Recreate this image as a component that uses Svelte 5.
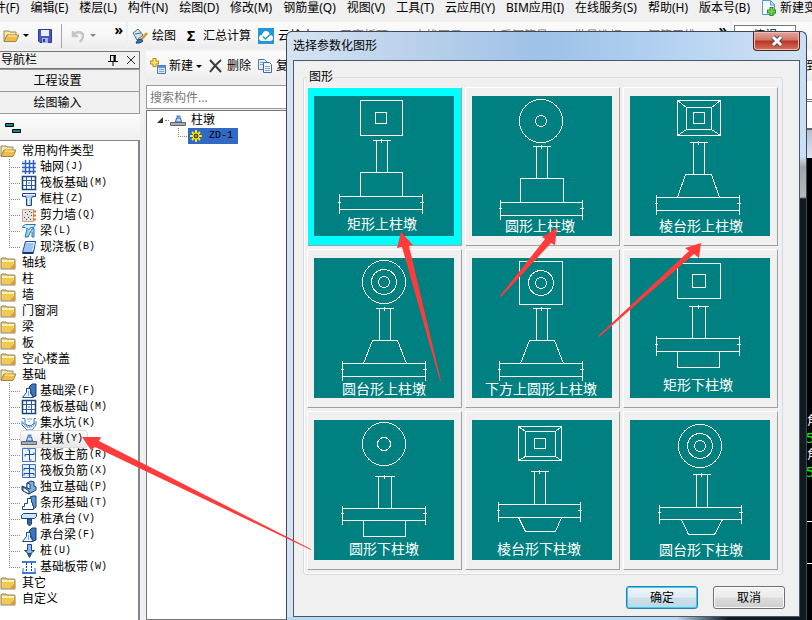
<script>
    const menus = [
        '文件(F)', '编辑(E)', '楼层(L)', '构件(N)', '绘图(D)', '修改(M)', '钢筋量(Q)', '视图(V)',
        '工具(T)', '云应用(Y)', 'BIM应用(I)', '在线服务(S)', '帮助(H)', '版本号(B)'
    ];

    const tree = [
        { name: '常用构件类型', children: [
            { name: '轴网', key: 'J', icon: 'axis' },
            { name: '筏板基础', key: 'M', icon: 'raft' },
            { name: '框柱', key: 'Z', icon: 'column' },
            { name: '剪力墙', key: 'Q', icon: 'wall' },
            { name: '梁', key: 'L', icon: 'beam' },
            { name: '现浇板', key: 'B', icon: 'slab' }
        ] },
        { name: '轴线' },
        { name: '柱' },
        { name: '墙' },
        { name: '门窗洞' },
        { name: '梁' },
        { name: '板' },
        { name: '空心楼盖' },
        { name: '基础', children: [
            { name: '基础梁', key: 'F', icon: 'footbeam' },
            { name: '筏板基础', key: 'M', icon: 'raft' },
            { name: '集水坑', key: 'K', icon: 'sump' },
            { name: '柱墩', key: 'Y', icon: 'pier' },
            { name: '筏板主筋', key: 'R', icon: 'mainbar' },
            { name: '筏板负筋', key: 'X', icon: 'negbar' },
            { name: '独立基础', key: 'P', icon: 'isolated' },
            { name: '条形基础', key: 'T', icon: 'strip' },
            { name: '桩承台', key: 'V', icon: 'cap' },
            { name: '承台梁', key: 'F', icon: 'footbeam' },
            { name: '桩', key: 'U', icon: 'pile' },
            { name: '基础板带', key: 'W', icon: 'band' }
        ] },
        { name: '其它' },
        { name: '自定义' }
    ];

    // all icons are drawn on a 16x16 box
    const icons = {
        closed: '<path d="M1 4q0-1 1-1h4l1 1h7q1 0 1 1v9H1z" fill="#f3c953" stroke="#8a8578"/><path d="M2 5h12v2H2z" fill="#fff0b4"/><path d="M10 13.500h5V8z" fill="#d79a2b"/>',
        open: '<path d="M1 13V3h5l1 1h6v3" fill="#ffe79a" stroke="#8a8578"/><path d="M1 13.500L4 7h12l-3 6.500z" fill="#f0bc45" stroke="#a08348"/><path d="M5 8h9" stroke="#fff2bd"/>',
        axis: '<path d="M4.500 1v14M8.500 1v14M12.500 1v14M1 4.500h14M1 8.500h14M1 12.500h14" stroke="#2e5fc0" stroke-width="1.500"/><path d="M1 3h2M1 7h2M1 11h2" stroke="#8fb4ee"/>',
        raft: '<path d="M1.500 1.500h13v13h-13z" fill="#fff" stroke="#17427e" stroke-width="1.500"/><path d="M5.500 2v12M10.500 2v12M2 5.500h12M2 10.500h12" stroke="#2c5c9e"/><path d="M7 7h2v2H7z" fill="#9fc0e8"/>',
        column: '<path d="M1.500 2.500h13v3h-3l-1 2v7h-5v-7l-1-2h-3z" fill="#a9d1f5" stroke="#1c3f99"/><path d="M2 3.500h12M7.500 7v7" stroke="#fff"/>',
        wall: '<path d="M1.500 2.500h11v12h-11z" fill="#e4e4e4" stroke="#d9a184"/><path d="M4 5.500h1M8 4.500h1M6 7.500h1M10 8.500h1M3 10.500h1M7 10.500h1M5 12.500h1M9 12.500h1M10 5.500h1" stroke="#444"/><path d="M12 4.500h3M12 8.500h3M12 12.500h3" stroke="#d67a24" stroke-width="2"/>',
        beam: '<path d="M1.500 3.500l3-2h10l-2 3h-3l-1 2-3-1-1-1h-3z" fill="#d8ecfb" stroke="#2379b8"/><path d="M6 6l-2 8h3l4-8 2-1v9h-2V9" fill="#9fcdf0" stroke="#2379b8"/>',
        slab: '<path d="M4.500 2.500h10l-2 11h-11z" fill="#9fc4f4" stroke="#1b4aa5"/><path d="M5.500 3.500h8l-2 8" fill="none" stroke="#eaf4ff"/><path d="M1.500 14h11" stroke="#16377c" stroke-width="2"/>',
        footbeam: '<path d="M8 4l3-3h4v12l-3 1z" fill="#3d74b8" stroke="#163d78"/><path d="M5.500 5.500h4v5l3 4H1.500l4-5z" fill="#e9f3ff" stroke="#1d4d92"/><path d="M7.500 8v5" stroke="#7fa8d8"/>',
        sump: '<path d="M1 3.500h3v5l3 2h3l3-2v-5h2M1 6v4l5 5h5l4-5V6" fill="none" stroke="#3a7fc4"/><path d="M2 8l4 4h4l4-4" stroke="#3a7fc4" stroke-width="2" stroke-dasharray="1 1" fill="none"/><path d="M6 4h5M8 6v1" stroke="#6ba7dd"/>',
        pier: '<path d="M5.500 10l1-4h4l1 4z" fill="#b9dcfa" stroke="#2a62ad"/><path d="M6.500 3.500h4v2h-4z" fill="#4d88cf"/><path d="M.5 10.500h15v3H.5z" fill="#a8adb3" stroke="#5e646c"/>',
        mainbar: '<path d="M1.500 1.500h13v13h-13z" fill="#eaf3ff" stroke="#4472b8"/><path d="M8.500 3v10M4 7.500h9M4 7.500v2M13 7.500v-2M8.500 3h-2M8.500 13h2" stroke="#1f4b93" fill="none"/>',
        negbar: '<path d="M1.500 1.500h13v13h-13z" fill="#dcebfd" stroke="#4472b8"/><path d="M8.500 2v12M3 5.500h10M3 10.500h10M3 5.500v2M13 5.500v2M3 10.500v2M13 10.500v2" stroke="#1f4b93" fill="none"/>',
        isolated: '<path d="M1 7l5 2v-5l4-2 3 1v4l2 1v3l-7 4-7-4z" fill="#79afdf" stroke="#173e70"/><path d="M6 4l3 1v5l-3-1zM2 8l6 4v3l-6-3z" fill="#eef7ff" stroke="#173e70"/>',
        strip: '<path d="M9 2l3-1h3v11l-3 2z" fill="#5c93cf" stroke="#173e70"/><path d="M6.500 3.500h4v4h1v3h1v4H1.500v-3h2v-3h3z" fill="#fff" stroke="#1c467f"/>',
        cap: '<path d="M.5 4.500l2-2h13v3l-2 2H.5z" fill="#cfe5f8" stroke="#1c467f"/><path d="M6.500 8h4v5l-2 2-2-2z" fill="#2f68aa" stroke="#1c467f"/><path d="M1 7.500h12" stroke="#1c467f"/>',
        pile: '<path d="M6.500 1.500h4v6h3l-5 4-5-4h3z" fill="#8ebbe8" stroke="#1c467f"/><path d="M6.500 10.500h4l-2 4z" fill="#2a5a9b" stroke="#1c467f"/>',
        band: '<path d="M1 3h14M1 14h14" stroke="#3b7bd1" stroke-width="2"/><path d="M5.500 4v9M10.500 4v9" stroke="#1d3f77" stroke-dasharray="2 1"/><path d="M2 13V9M14 13V9" stroke="#8db8ee" stroke-width="2"/>',
        save: '<path d="M1.500 1.500h13v13H3l-1.500-1.500z" fill="#4a56c4" stroke="#303a94"/><path d="M4 2h8v6H4z" fill="#e8ecff"/><path d="M5 10h6v5H5z" fill="#a9b2e8"/><path d="M6 11h2v3H6z" fill="#303a94"/>',
        undo: '<path d="M3 3v5h5M3 8c2-5 10-5 10 0 0 3-2 4-3 6" fill="none" stroke="#c3c6ca" stroke-width="2.500"/>',
        paint: '<path d="M1 5l5-4 5 6-6 5z" fill="#cfe2ee" stroke="#4e7386"/><path d="M3 6l6-1" stroke="#4e7386"/><path d="M15 5l-6 7" stroke="#d8962a" stroke-width="2.500"/><path d="M4 15q1-4 5-4l2 2q-3 3-7 2z" fill="#3a6fc6" stroke="#1e4388"/>',
        cloud: '<path d="M0 0h16v16H0z" fill="#2196d9"/><path d="M4 13q-3 0-3-3t3-3q1-4 4-4t4 4q3 0 3 3t-3 3z" fill="#fff"/><path d="M5 8.500l2.500 2.500L12 6.500" fill="none" stroke="#2196d9" stroke-width="1.500"/>',
        add: '<path d="M4.500 0v9M0 4.500h9" stroke="#b98a1a" stroke-width="4"/><path d="M4.500 1v7M1 4.500h7" stroke="#ffe96b" stroke-width="2"/><path d="M7.500 7.500h8v8h-8z" fill="#dcebff" stroke="#5077b3"/><path d="M8 9h7" stroke="#5b94de" stroke-width="2"/><path d="M9 11.500h5M9 13.500h5" stroke="#7da3d8"/>',
        remove: '<path d="M2 2l11 12M13 2Q7 7 2 14" fill="none" stroke="#3c3c3c" stroke-width="2"/>',
        copy: '<path d="M1.500 1.500h6l2 2v8h-8z" fill="#e6f0ff" stroke="#5077b3"/><path d="M6.500 4.500h6l2 2v8h-8z" fill="#f3f8ff" stroke="#3f68aa"/><path d="M8 8.500h5M8 10.500h5M8 12.500h5M3 4.500h3M3 6.500h3" stroke="#7da3d8"/>',
        page: '<path d="M1.500 .5h8l4 4v10h-12z" fill="#f2f9ff" stroke="#5a9bd0"/><path d="M9.500 1v4h4" fill="#b9dcf5" stroke="#5a9bd0"/><path d="M10.500 7v9M6 11.500h9" stroke="#2f8f23" stroke-width="4"/><path d="M10.500 8v7M7 11.500h7" stroke="#74d84b" stroke-width="2"/>',
        sun: '<path d="M8 2v12M2 8h12M4 4l8 8M12 4l-8 8" stroke="#ffe81a" stroke-width="2"/><circle cx="8" cy="8" r="3" fill="#5d5200" stroke="#ffe81a"/><path d="M7 8h2" stroke="#ffe81a"/>',
        pin: '<path d="M5.500 3v6M10 3v6M5 3.500h6M3 9.500h10M8 10v4" stroke="#000"/><path d="M9.500 3v6" stroke="#000" stroke-width="2"/>',
        close: '<path d="M4 4l8 8M12 4l-8 8" stroke="#222"/>'
    };

    const box = (x1, y1, x2, y2) => `M${x1} ${y1}H${x2}V${y2}H${x1}Z`;

    const column = (x1, x2, y1, y2) => {
        const mid = Math.floor((x1 + x2) / 2) - .5;
        return `M${x1 - 4} ${y1}H${x2 + 3}M${x1} ${y1}V${y2}M${x2} ${y1}V${y2}M${mid} ${y1 - 1.5}v4`;
    };

    const slab = (x1, x2, y1, y2) => {
        const mid = Math.floor((y1 + y2) / 2) - .5;
        return box(x1, y1, x2, y2)
            + `M${x1} ${y1 - 3}V${y2 + 4}M${x2} ${y1 - 3}V${y2 + 4}M${x1 - 1.5} ${mid}h3M${x2 - 2.5} ${mid}h4`;
    };

    // trapezoid between two levels
    const taper = (a1, a2, ya, b1, b2, yb) => `M${a1} ${ya}H${a2}L${b2} ${yb}H${b1}Z`;

    const corners = (x1, y1, x2, y2, u1, v1, u2, v2) =>
        box(x1, y1, x2, y2) + box(u1, v1, u2, v2)
        + `M${x1} ${y1}L${u1} ${v1}M${x2} ${y1}L${u2} ${v1}M${x1} ${y2}L${u1} ${v2}M${x2} ${y2}L${u2} ${v2}`;

    const shapes = [
        { name: '矩形上柱墩', x: 33, y: 133, circles: [],
          d: box(46.5, 4.5, 88.5, 39.5) + box(61.5, 16.5, 72.5, 27.5) + column(62.5, 73.5, 44.5, 76.5)
            + box(46.5, 76.5, 88.5, 100.5) + slab(25.5, 108.5, 100.5, 113.5) },
        { name: '圆形上柱墩', x: 33, y: 135, circles: [[69, 25, 21.5], [69, 25, 5.5]],
          d: column(64.5, 75.5, 50.5, 82.5) + box(48.5, 82.5, 91.5, 106.5) + slab(28.5, 110.5, 106.5, 119.5) },
        { name: '棱台形上柱墩', x: 29, y: 135, circles: [],
          d: corners(47.5, 4.5, 90.5, 39.5, 56.5, 11.5, 81.5, 33.5) + box(63.5, 16.5, 74.5, 27.5)
            + column(63.5, 74.5, 46.5, 78.5) + taper(55.5, 81.5, 78.5, 47.5, 89.5, 101.5) + slab(26.5, 109.5, 101.5, 114.5) },
        { name: '圆台形上柱墩', x: 28, y: 136, circles: [[70, 24, 21.5], [70, 24, 12.5], [70, 24, 5.5]],
          d: column(65.5, 76.5, 50.5, 82.5) + taper(58.5, 83.5, 82.5, 49.5, 92.5, 105.5) + slab(28.5, 111.5, 105.5, 118.5) },
        { name: '下方上圆形上柱墩', x: 13, y: 136, circles: [[69, 25, 12.5], [69, 25, 5.5]],
          d: box(47.5, 3.5, 90.5, 46.5) + column(64.5, 75.5, 50.5, 82.5)
            + taper(57.5, 82.5, 82.5, 48.5, 91.5, 105.5) + slab(27.5, 110.5, 105.5, 118.5) },
        { name: '矩形下柱墩', x: 33, y: 132, circles: [],
          d: box(47.5, 5.5, 90.5, 40.5) + box(62.5, 16.5, 75.5, 29.5) + column(62.5, 75.5, 48.5, 80.5)
            + slab(26.5, 109.5, 80.5, 93.5) + box(47.5, 93.5, 89.5, 109.5) },
        { name: '圆形下柱墩', x: 35, y: 134, circles: [[70, 24, 21.5], [70, 24, 6.5]],
          d: column(64.5, 77.5, 56.5, 88.5) + slab(28.5, 111.5, 88.5, 100.5) + box(49.5, 100.5, 91.5, 116.5) },
        { name: '棱台形下柱墩', x: 25, y: 134, circles: [],
          d: corners(46.5, 6.5, 89.5, 40.5, 53.5, 11.5, 83.5, 36.5) + box(62.5, 18.5, 73.5, 28.5)
            + column(62.5, 73.5, 51.5, 84.5) + slab(26.5, 108.5, 84.5, 97.5) + taper(46.5, 89.5, 97.5, 53.5, 83.5, 111.5) },
        { name: '圆台形下柱墩', x: 29, y: 135, circles: [[70, 26, 21.5], [70, 26, 12.5], [70, 26, 5.5]],
          d: column(66.5, 77.5, 54.5, 87.5) + slab(29.5, 111.5, 87.5, 99.5) + taper(51.5, 92.5, 99.5, 58.5, 84.5, 114.5) }
    ];

    const arrows = [
        '401,232 413,245 409,246 441,381 440,381 402,247 397,248',
        '557,228 555,245 551,243 501,297 500,296 545,239 542,237',
        '701,243 699,258 694,254 599,337 598,336 689,251 685,248',
        '82,437 101,437 99,441 311,549 311,550 95,447 91,450'
    ];

    let picked = $state(0);
    let search = $state('');
</script>

{#snippet icon(name)}
    <svg class="icon" viewBox="0 0 16 16" fill="none" aria-hidden="true">{@html icons[name]}</svg>
{/snippet}

<div class="app">
    <nav class="menubar">
        {#each menus as menu}
            <button>{menu}</button>
        {/each}
        <button class="change">{@render icon('page')}新建变更</button>
    </nav>

    <div class="toolbars">
        <div class="bar quick">
            <button aria-label="打开">{@render icon('open')}<i class="caret"></i></button>
            <button aria-label="保存">{@render icon('save')}</button>
            <span class="sep"></span>
            <button aria-label="撤销">{@render icon('undo')}<i class="caret dim"></i></button>
            <span class="more">»</span>
        </div>
        <div class="bar tools">
            <button>{@render icon('paint')}绘图</button>
            <button><b class="sigma">Σ</b>汇总计算</button>
            <button>{@render icon('cloud')}云检查</button>
            <button class="far">平齐板顶</button>
            <button class="far">查找图元</button>
            <button class="far">查看钢筋量</button>
            <button class="far">批量选择</button>
            <button class="far">钢筋三维</button>
            <span class="more">»</span>
        </div>
        <div class="bar view">
            <button class="angle">俯视</button>
        </div>
    </div>

    <div class="body">
        <aside>
            <header>
                <span>导航栏</span>
                <button aria-label="固定">{@render icon('pin')}</button>
                <button aria-label="关闭导航栏">{@render icon('close')}</button>
            </header>
            <button class="section">工程设置</button>
            <button class="section">绘图输入</button>
            <div class="strip">
                <svg width="18" height="12" aria-hidden="true">
                    <path d="M.5 .5h8v3h-8zM7.500 6.500h8v3h-8z" fill="#009090" stroke="#000" />
                </svg>
            </div>
            <ul class="tree">
                {#each tree as group}
                    <li>
                        <button class="folder">{@render icon(group.children ? 'open' : 'closed')}{group.name}</button>
                        {#if group.children}
                            <ul>
                                {#each group.children as item, i}
                                    <li class="leaf">
                                        <svg class="branch" width="12" height="16" aria-hidden="true">
                                            <path d={i === group.children.length - 1 ? 'M.5 0V8M0 8.500H12' : 'M.5 0V16M0 8.500H12'} />
                                        </svg>
                                        <button class:hot={item.key === 'Y'}>{@render icon(item.icon)}{item.name}<span class="key">({item.key})</span></button>
                                    </li>
                                {/each}
                            </ul>
                        {/if}
                    </li>
                {/each}
            </ul>
        </aside>

        <main>
            <div class="bar parts">
                <button>{@render icon('add')}新建<i class="caret"></i></button>
                <button>{@render icon('remove')}删除</button>
                <button>{@render icon('copy')}复制</button>
                <span class="edge">到</span>
            </div>
            <div class="work">
                <section class="list">
                    <input type="text" aria-label="搜索构件" placeholder="搜索构件..." bind:value={search}>
                    <div class="items">
                        <div class="root">
                            <svg width="8" height="8" aria-hidden="true"><path d="M7 1v6H1z" fill="#333" /></svg>
                            <span class="dots"></span>
                            {@render icon('pier')}
                            <span>柱墩</span>
                        </div>
                        <div class="node">
                            <svg class="branch" width="10" height="16" aria-hidden="true"><path d="M.5 0V8M0 8.500H10" /></svg>
                            <button>{@render icon('sun')}ZD-1</button>
                        </div>
                    </div>
                </section>
                <section class="canvas">
                    <div class="paper"></div>
                    <div class="band"></div>
                    <div class="model">
                        <p>角</p>
                        <p class="num">5</p>
                        <p>角</p>
                        <p class="num">5</p>
                        <hr>
                        <hr>
                    </div>
                </section>
            </div>
        </main>
    </div>

    <div class="dialog" role="dialog" aria-labelledby="dialog-title">
        <div class="titlebar">
            <span id="dialog-title">选择参数化图形</span>
            <button class="x" aria-label="关闭">
                <svg width="14" height="12" aria-hidden="true">
                    <path d="M3 2l8 8M11 2l-8 8" stroke="#4a4a5c" stroke-width="5" />
                    <path d="M3 2l8 8M11 2l-8 8" stroke="#fff" stroke-width="3" />
                </svg>
            </button>
        </div>
        <div class="client">
            <fieldset>
                <legend>图形</legend>
                <div class="grid">
                    {#each shapes as shape, i}
                        <button class="tile" class:picked={picked === i} aria-pressed={picked === i} onclick={() => picked = i}>
                            <svg viewBox="0 0 140 140" width="140" height="140">
                                <path d={shape.d} />
                                {#each shape.circles as [cx, cy, r]}
                                    <circle {cx} {cy} {r} />
                                {/each}
                                <text x={shape.x} y={shape.y}>{shape.name}</text>
                            </svg>
                        </button>
                    {/each}
                </div>
            </fieldset>
            <div class="actions">
                <button class="ok">确定</button>
                <button>取消</button>
            </div>
        </div>
    </div>

    <svg class="arrows" aria-hidden="true">
        {#each arrows as points}
            <polygon {points} />
        {/each}
    </svg>
</div>

<style>
:global(body) {
    background: #f0f0f0;
}

.app {
    position: relative;
    display: flex;
    flex-direction: column;
    min-height: 100vh;
    overflow: hidden;
    background: #f0f0f0;
    color: #000;
    font: 12px/16px "Noto Sans", "Noto Sans CJK SC", sans-serif;
}

button {
    display: flex;
    align-items: center;
    flex: none;
    margin: 0;
    padding: 0;
    border: 0;
    background: none;
    color: inherit;
    font: inherit;
    white-space: nowrap;
}

ul {
    list-style: none;
    margin: 0;
    padding: 0;
}

.icon {
    width: 16px;
    height: 16px;
    flex: none;
}

.menubar {
    display: flex;
    gap: 11px;
    height: 22px;
    padding-bottom: 6px;
    box-sizing: border-box;
    margin-left: -18px;
    overflow: hidden;
}

.change {
    gap: 3px;
}

.toolbars {
    display: flex;
    gap: 2px;
    height: 27px;
}

.bar {
    display: flex;
    align-items: center;
    background: linear-gradient(#fbfbfb, #f5f5f5 60%, #ececec);
}

.quick {
    width: 123px;
    padding-left: 3px;
    flex: none;
}

.quick button {
    margin-right: 8px;
}

.sep {
    width: 1px;
    height: 24px;
    margin-right: 8px;
    background: #a5a5a5;
}

.caret {
    margin-left: 6px;
    border: 3px solid transparent;
    border-top-color: #000;
    border-bottom: 0;
}

.quick .caret {
    margin-left: 4px;
}

.quick .dim {
    border-top-color: #888;
}

.more {
    align-self: flex-start;
    margin-left: auto;
    padding-right: 3px;
    font-size: 14px;
    font-weight: bold;
}

.tools {
    flex: 1;
    gap: 7px;
    padding-left: 4px;
    overflow: hidden;
}

.tools button {
    gap: 4px;
}

.tools .far {
    margin-left: 19px;
    color: #777;
}

.sigma {
    width: 16px;
    text-align: center;
    font-size: 14px;
}

.view {
    width: 80px;
    flex: none;
}

.angle {
    width: 62px;
    height: 22px;
    margin-left: 2px;
    justify-content: center;
    border: 1px solid #777;
    background: #fff;
}

.body {
    display: flex;
    flex: 1;
    gap: 6px;
    padding-top: 2px;
}

aside {
    display: flex;
    flex-direction: column;
    width: 140px;
    flex: none;
}

aside header {
    display: flex;
    align-items: center;
    gap: 2px;
    height: 16px;
    border: 1px solid #777;
    border-left: 0;
    padding-left: 1px;
}

header span {
    flex: 1;
}

.section {
    justify-content: center;
    height: 22px;
    padding-right: 24px;
    border: solid #999;
    border-width: 1px 1px 0 0;
}

.section + .section {
    border-bottom-width: 1px;
    height: 23px;
}

.strip {
    height: 17px;
    padding: 9px 0 0 5px;
    background: linear-gradient(#fcfcfc, #f0f0f0);
}

.tree {
    flex: 1;
    padding-top: 2px;
    border: solid #828790;
    border-width: 1px 2px 0 0;
    background: #fff;
}

.tree button {
    height: 16px;
}

.folder {
    gap: 6px;
}

.leaf {
    display: flex;
    padding-left: 9px;
}

.leaf button {
    gap: 3px;
    padding-right: 4px;
    border-radius: 3px;
}

.leaf .hot {
    background: linear-gradient(#fafafa, #e8e8e8);
    box-shadow: 0 0 0 1px #dcdcdc;
}

.key {
    margin-left: -2px;
    font: 10px/16px "Liberation Mono", monospace;
}

.branch {
    flex: none;
    fill: none;
    stroke: #888;
    stroke-dasharray: 1 1;
}

main {
    display: flex;
    flex-direction: column;
    flex: 1;
    min-width: 0;
}

.parts {
    gap: 6px;
    height: 30px;
    padding-left: 4px;
    overflow: hidden;
}

.parts button {
    gap: 3px;
}

.parts .caret {
    margin-left: 0;
}

.edge {
    width: 6px;
    margin-left: auto;
    white-space: nowrap;
}

.work {
    display: flex;
    flex: 1;
}

.list {
    display: flex;
    flex-direction: column;
    width: 200px;
    padding-top: 4px;
}

.list input {
    box-sizing: border-box;
    height: 24px;
    margin-bottom: 1px;
    padding: 0 3px;
    border: 1px solid #9a9a9a;
    background: #fff;
    font: inherit;
}

.list input::placeholder {
    color: #777;
}

.items {
    flex: 1;
    padding-top: 1px;
    border: 1px solid #777;
    background: #fff;
}

.root {
    display: flex;
    align-items: center;
    height: 16px;
    padding-left: 9px;
}

.root .icon {
    margin-right: 5px;
}

.dots {
    width: 4px;
    margin: 0 1px;
    border-top: 1px dotted #888;
}

.node {
    display: flex;
    padding-left: 31px;
}

.node button {
    gap: 5px;
    width: 50px;
    background: #316ac5;
    font: 10px/16px "Liberation Mono", monospace;
}

.canvas {
    display: flex;
    flex-direction: column;
    flex: 1;
    overflow: hidden;
}

.paper {
    height: 18px;
    border-bottom: 3px double #777;
    background: #fff;
}

.band {
    height: 28px;
    padding-top: 28px;
    background: linear-gradient(#fff 26px, #666 26px, #666 28px, #b4c0d2 28px, #dce6f2);
}

.model {
    flex: 1;
    padding-top: 255px;
    background: #000;
    color: #fff;
}

.model p {
    width: 5px;
    margin: 0 0 1px auto;
    white-space: nowrap;
}

.model .num {
    width: 6px;
    color: #0f0;
    font-size: 14px;
}

.model hr {
    margin: 41px 0 0;
    border: 0;
    border-top: 1px solid #fff;
}

.dialog {
    position: absolute;
    top: 31px;
    left: 286px;
    padding: 0 6px 3px;
    border: 1px solid #3c4a58;
    border-bottom: 0;
    border-radius: 6px 6px 0 0;
    background:
        linear-gradient(90deg, #b8d9ef 75%, #101a22 85%) bottom / 100% 3px no-repeat,
        linear-gradient(#c8dff5 0 125px, #a0a4a8 135px, #b5b9bd 165px, #101a22 167px) right / 7px 100% no-repeat,
        linear-gradient(90deg, #d5e4f3, #b9d0ea 25%, #9dc1e8 50%, #b5d3f2 75%, #d3e3f3);
}

.titlebar {
    display: flex;
    justify-content: space-between;
    align-items: center;
    height: 28px;
}

.x {
    justify-content: center;
    align-self: flex-start;
    width: 47px;
    height: 19px;
    border: 1px solid #4d2523;
    border-top: 0;
    border-radius: 0 0 4px 4px;
    background: linear-gradient(#e3a79d, #d1766a 45%, #b83222 50%, #d8755b);
    box-shadow: inset 0 0 0 1px #f0bdb4;
}

.client {
    padding: 8px 14px 7px 9px;
    border: 1px solid #49596b;
    background: #f0f0f0;
}

fieldset {
    margin: 0 2px 0 0;
    padding: 2px 4px 4px 3px;
    border: 1px solid #d0dce6;
    border-radius: 3px;
    box-shadow: inset 1px -1px #fff;
}

legend {
    padding: 0 2px;
    line-height: 16px;
}

.grid {
    display: grid;
    grid-template-columns: repeat(3, auto);
    gap: 3px;
}

.tile {
    padding: 8px 6px 9px;
    border: 1px solid;
    border-color: #fff #a0a0a0 #a0a0a0 #fff;
}

.tile.picked {
    background: #0ff;
}

.tile svg {
    margin-right: 1px;
    background: #008080;
    fill: none;
    stroke: #fff;
    shape-rendering: crispEdges;
}

.tile text {
    fill: #fff;
    stroke: none;
    font: 14px "Noto Sans CJK SC", sans-serif;
}

.actions {
    display: flex;
    justify-content: flex-end;
    gap: 15px;
    margin-top: 11px;
}

.actions button {
    justify-content: center;
    width: 72px;
    height: 23px;
    border: 1px solid #707070;
    border-radius: 3px;
    background: linear-gradient(#f3f3f3, #ebebeb 48%, #dcdcdc 52%, #cfcfcf);
    box-shadow: inset 0 0 0 1px #fbfbfb;
}

.actions .ok {
    border-color: #2c7fae;
    background: linear-gradient(#eef5f9, #e0ecf3 48%, #cde0ea 52%, #bfd7e4);
    box-shadow: inset 0 0 0 1px #38cdf5;
}

.arrows {
    position: absolute;
    inset: 0;
    width: 100%;
    height: 100%;
    fill: #ff3b3b;
    pointer-events: none;
}
</style>
